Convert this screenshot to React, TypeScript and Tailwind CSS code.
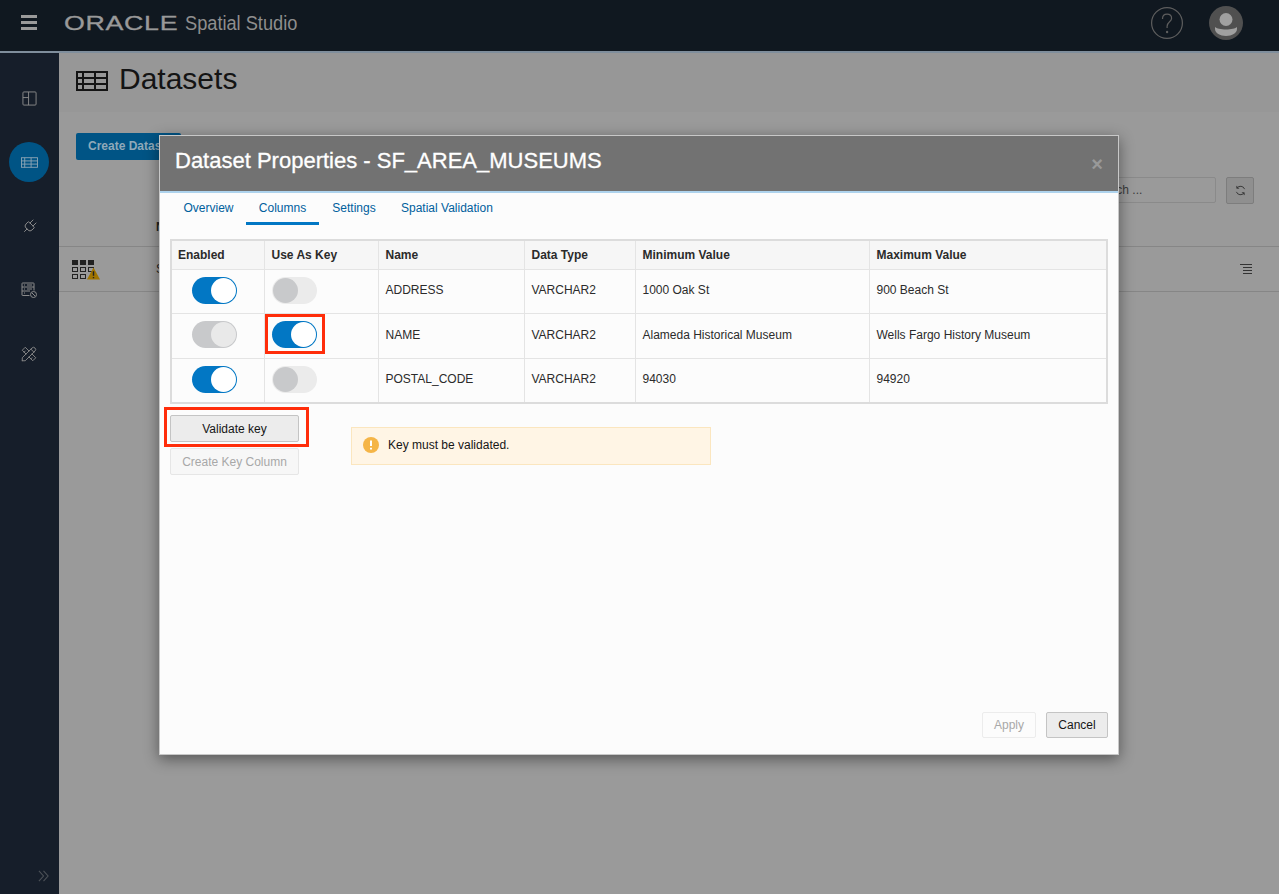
import { Plug } from 'lucide-react'
import { TbTools } from 'react-icons/tb'

const rows = [
    {enabled:'on',key:'off',name:'ADDRESS',type:'VARCHAR2',min:'1000 Oak St',max:'900 Beach St',height:'h-[44px]'},
    {enabled:'disabled',key:'on',name:'NAME',type:'VARCHAR2',min:'Alameda Historical Museum',max:'Wells Fargo History Museum',height:'h-[45px]'},
    {enabled:'on',key:'off',name:'POSTAL_CODE',type:'VARCHAR2',min:'94030',max:'94920',height:'h-[44px]'},
]

const headers = [
    {label:'Enabled',width:'w-[92px] px-[6px]'},
    {label:'Use As Key',width:'w-[114px] px-[7px]'},
    {label:'Name',width:'w-[146px] px-[7px]'},
    {label:'Data Type',width:'w-[111px] px-[7px]'},
    {label:'Minimum Value',width:'w-[234px] px-[7px]'},
    {label:'Maximum Value',width:'px-[7px]'},
]

const Toggle = ({state}:{state:string}) => {
    if(state==='on'){
        return (
            <div className="flex h-[27px] w-[45px] items-center justify-end rounded-full bg-[#0277c4] pr-px">
                <div className="h-[25px] w-[25px] rounded-full bg-white"></div>
            </div>
        )
    }
    if(state==='disabled'){
        return (
            <div className="flex h-[27px] w-[45px] items-center justify-end rounded-full bg-[#c8c9cb] pr-px">
                <div className="h-[25px] w-[25px] rounded-full bg-[#e9e9e9]"></div>
            </div>
        )
    }
    return (
        <div className="flex h-[27px] w-[45px] items-center justify-start rounded-full bg-[#ebebeb] pl-px">
            <div className="h-[25px] w-[25px] rounded-full bg-[#c8c9cb]"></div>
        </div>
    )
}

const TableIcon = ({className,stroke,weight}:{className:string,stroke:string,weight:number}) => (
    <svg viewBox="0 0 32 20" className={className} fill="none" stroke={stroke} strokeWidth={weight}>
        <rect x="1" y="1" width="30" height="18"/>
        <path d="M1 7h30M1 13h30M7 1v18M19 1v18"/>
    </svg>
)

const SideIcon = ({children,active}:{children:any,active?:boolean}) => (
    <div className="flex h-[64px] items-center justify-center pr-px">
        <div className={`flex h-10 w-10 items-center justify-center rounded-full ${active ? 'bg-[#005485]' : ''}`}>
            {children}
        </div>
    </div>
)

const App = () => {
    return (
        <div className="relative flex h-[894px] w-[1279px] flex-col overflow-hidden bg-[#9a9a9a] font-['Liberation_Sans',sans-serif]">
            <header className="flex h-[53px] shrink-0 items-center border-b-2 border-[#7f8e9c] bg-[#101820] pb-[6px] pl-[21px] pr-[36px]">
                <div className="flex w-[16px] flex-col gap-[3px]">
                    <div className="h-[3px] bg-[#9a9a9a]"></div>
                    <div className="h-[3px] bg-[#9a9a9a]"></div>
                    <div className="h-[3px] bg-[#9a9a9a]"></div>
                </div>
                <span className="ml-[27px] w-[93px] origin-left scale-x-[1.34] text-[20px] leading-none tracking-[0.5px] text-[#999999] [-webkit-text-stroke:0.3px_#999999]">ORACLE</span>
                <span className="ml-[28px] origin-left scale-x-[0.91] text-[20px] leading-none text-[#8e8e8e]">Spatial Studio</span>
                <svg viewBox="0 0 32 32" className="ml-auto h-8 w-8" fill="none" stroke="#5e5e5e" strokeWidth="1.2">
                    <circle cx="16" cy="16" r="15.4"/>
                    <path d="M11.5 12c0-3 2-4.8 4.6-4.8 2.7 0 4.5 1.8 4.5 4.1 0 3.4-4.5 3.7-4.5 8v1.6"/>
                    <circle cx="16.1" cy="25" r="0.6" fill="#5e5e5e"/>
                </svg>
                <svg viewBox="0 0 34 34" className="ml-[26px] h-[34px] w-[34px]">
                    <circle cx="17" cy="17" r="17" fill="#505050"/>
                    <circle cx="17" cy="13.500" r="6.500" fill="#a0a0a0"/>
                    <path d="M6 21c1.500 1.500 6 2.500 11 2.500s9.500-1 11-2.500v2c0 4-5 7-11 7S6 27 6 23z" fill="#a0a0a0"/>
                </svg>
            </header>

            <div className="flex flex-1">
                <nav className="relative flex w-[59px] shrink-0 flex-col bg-[#161e2a] pt-[13px]">
                    <SideIcon>
                        <svg viewBox="0 0 16 16" className="h-[15px] w-[15px]" fill="none" stroke="#8b8b8b" strokeWidth="1">
                            <rect x="1" y="1" width="14" height="14" rx="1"/>
                            <path d="M1 7h6M7 1v14"/>
                        </svg>
                    </SideIcon>
                    <SideIcon active>
                        <TableIcon className="h-[13px] w-[17px]" stroke="#8ea6b6" weight={1.7}/>
                    </SideIcon>
                    <SideIcon>
                        <Plug className="h-[17px] w-[17px] rotate-45 text-[#8b8b8b]" strokeWidth={1.3}/>
                    </SideIcon>
                    <SideIcon>
                        <svg viewBox="0 0 16 16" className="h-[16px] w-[16px]" fill="none" stroke="#8b8b8b" strokeWidth="1">
                            <path d="M8.500 13.500H1.500a.500.500 0 0 1-.500-.500V1.500a.500.500 0 0 1 .500-.500h11a.500.500 0 0 1 .500.500V8.500M1 5h12M1 9h8M3 3h1M3 7h1M3 11h1M6 3h5M6 7h5"/>
                            <circle cx="12.500" cy="12.500" r="3"/>
                            <path d="M11 11l3 3"/>
                        </svg>
                    </SideIcon>
                    <SideIcon>
                        <TbTools className="h-[18px] w-[18px] text-[#8b8b8b]" strokeWidth={1.2}/>
                    </SideIcon>
                    <svg viewBox="0 0 12 12" className="absolute bottom-[12px] left-[38px] h-[12px] w-[11px]" fill="none" stroke="#4c5157" strokeWidth="1.2">
                        <path d="M1 .5L6 6l-5 5.500M6 .5L11 6l-5 5.500"/>
                    </svg>
                </nav>

                <main className="flex-1">
                    <div className="flex h-[59px] items-start bg-[#979797] pl-[17px] pt-[8px]">
                        <TableIcon className="mt-[10px] h-[20px] w-[32px]" stroke="#141414" weight={2}/>
                        <h1 className="ml-[11px] text-[30px] leading-[36px] text-[#141414]">Datasets</h1>
                    </div>
                    <div className="relative flex h-[134px] items-start justify-between pl-[17px] pr-[25px] pt-[21px]">
                        <button className="h-[27px] w-[105px] rounded-[2px] bg-[#005485] pb-px pl-3 text-left text-[12px] font-bold text-[#8fa9b9]">Create Dataset</button>
                        <div className="mt-[44px] flex gap-[10px]">
                            <div className="flex h-[26px] w-[200px] items-center rounded-[2px] border border-[#8a8a8a] pl-[74px] text-[12px] text-[#3c3c3c]">Search ...</div>
                            <div className="flex h-[27px] w-[28px] items-center justify-center rounded-[2px] border border-[#7d7d7d] bg-[#8f8f8f]">
                                <svg viewBox="0 0 12 12" className="h-[11px] w-[11px]" fill="none" stroke="#333333" strokeWidth="1">
                                    <path d="M10.500 4.500A4.800 4.800 0 0 0 2 3.500M1.500 7.500A4.800 4.800 0 0 0 10 8.500M2 1v2.500h2.500M10 11V8.500H7.500"/>
                                </svg>
                            </div>
                        </div>
                        <span className="absolute bottom-[10px] left-[97px] text-[12px] font-bold text-[#222222]">Name</span>
                    </div>
                    <div className="flex h-[46px] items-center justify-between border-y border-[#868686] pl-[13px] pr-[27px]">
                        <div className="relative flex items-center">
                            <div className="grid w-[22px] grid-cols-3 gap-x-[2px] gap-y-[2px]">
                                <div className="h-[5px] bg-[#222222]"></div>
                                <div className="h-[5px] bg-[#222222]"></div>
                                <div className="h-[5px] bg-[#222222]"></div>
                                <div className="h-[5px] border border-[#222222]"></div>
                                <div className="h-[5px] border border-[#222222]"></div>
                                <div className="h-[5px] border border-[#222222]"></div>
                                <div className="h-[5px] border border-[#222222]"></div>
                                <div className="h-[5px] border border-[#222222]"></div>
                            </div>
                            <svg viewBox="0 0 12 12" className="absolute left-[15px] top-[7px] h-[13px] w-[13px]">
                                <path d="M6 .5L12 11.500H0z" fill="#a07400"/>
                                <path d="M6 4v4M6 9.200v1.200" stroke="#222222" strokeWidth="1.300"/>
                            </svg>
                            <span className="ml-[62px] text-[12px] text-[#222222]">SF_AREA_MUSEUMS</span>
                        </div>
                        <div className="flex w-[12px] flex-col items-end gap-[2px]">
                            <div className="h-px w-[12px] bg-[#333333]"></div>
                            <div className="h-px w-[9px] bg-[#333333]"></div>
                            <div className="h-px w-[9px] bg-[#333333]"></div>
                            <div className="h-px w-[9px] bg-[#333333]"></div>
                        </div>
                    </div>
                </main>
            </div>

            <div className="absolute left-[159px] top-[135px] flex h-[620px] w-[960px] flex-col border border-[#c8c8c8] bg-[#fcfcfc] shadow-[0_4px_14px_rgba(0,0,0,0.45)]">
                <div className="flex h-[55px] shrink-0 items-center justify-between bg-[#727272] pl-[15px] pr-[15px]">
                    <h2 className="mb-[6px] text-[22px] text-white [-webkit-text-stroke:0.3px_white]">Dataset Properties - SF_AREA_MUSEUMS</h2>
                    <span className="text-[20px] font-bold leading-none text-[#999999]">×</span>
                </div>
                <div className="h-[2px] shrink-0 bg-[#aed3ed]"></div>
                <div className="flex h-[32px] shrink-0 pl-[12px] text-[12px] text-[#00609c]">
                    <div className="flex w-[73px] items-start justify-center pt-[6px]">Overview</div>
                    <div className="ml-px flex w-[73px] items-start justify-center border-b-[3px] border-[#0277c4] pt-[6px]">Columns</div>
                    <div className="flex w-[70px] items-start justify-center pt-[6px]">Settings</div>
                    <div className="flex items-start pl-[12px] pt-[6px]">Spatial Validation</div>
                </div>

                <div className="mx-[10px] mt-[14px] border-[2px] border-[#dcdcdc]">
                    <table className="w-full table-fixed border-collapse text-[12px] text-[#2b2b2b]">
                        <thead>
                            <tr className="h-[28px] border-b border-[#e4e4e4] bg-[#f6f6f6] text-left font-bold">
                                {headers.map((header)=>(
                                    <th key={header.label} className={`${header.width} border-r border-[#e4e4e4] last:border-r-0`}>{header.label}</th>
                                ))}
                            </tr>
                        </thead>
                        <tbody>
                            {rows.map((row)=>(
                                <tr key={row.name} className={`${row.height} border-b border-[#e4e4e4] last:border-b-0`}>
                                    <td className="border-r border-[#e4e4e4] pb-[2px] pl-[20px]"><Toggle state={row.enabled}/></td>
                                    <td className="border-r border-[#e4e4e4] pb-[2px] pl-[7px]"><Toggle state={row.key}/></td>
                                    <td className="border-r border-[#e4e4e4] px-[7px] pb-[2px]">{row.name}</td>
                                    <td className="border-r border-[#e4e4e4] px-[7px] pb-[2px]">{row.type}</td>
                                    <td className="border-r border-[#e4e4e4] px-[7px] pb-[2px]">{row.min}</td>
                                    <td className="px-[7px] pb-[2px]">{row.max}</td>
                                </tr>
                            ))}
                        </tbody>
                    </table>
                </div>

                <div className="flex pl-[10px] pt-[11px]">
                    <div className="flex w-[129px] flex-col gap-[6px] text-[12px]">
                        <button className="h-[27px] rounded-[2px] border border-[#c4c4c4] bg-[#ececec] text-[#161616]">Validate key</button>
                        <button className="h-[27px] rounded-[2px] border border-[#e6e6e6] bg-[#f7f7f7] text-[#a8a8a8]">Create Key Column</button>
                    </div>
                    <div className="ml-[52px] mt-[12px] flex h-[38px] w-[360px] items-center border border-[#fbe6bf] bg-[#fff5e5] pb-[2px] pl-[11px] text-[12px] text-[#161616]">
                        <svg viewBox="0 0 16 16" className="h-4 w-4">
                            <circle cx="8" cy="8" r="8" fill="#f5b547"/>
                            <path d="M8 3.500v5.500M8 10.800v1.700" stroke="#ffffff" strokeWidth="2"/>
                        </svg>
                        <span className="ml-[9px]">Key must be validated.</span>
                    </div>
                </div>

                <div className="mt-auto flex justify-end gap-[10px] pb-[16px] pr-[10px] text-[12px]">
                    <button className="h-[26px] w-[54px] rounded-[2px] border border-[#ececec] bg-[#fcfcfc] text-[#a8a8a8]">Apply</button>
                    <button className="h-[26px] w-[62px] rounded-[2px] border border-[#c4c4c4] bg-[#ececec] text-[#161616]">Cancel</button>
                </div>

                <div className="absolute left-[105px] top-[178px] h-[40px] w-[60px] border-[3px] border-[#ff2d0a]"></div>
                <div className="absolute left-[4px] top-[271px] h-[40px] w-[145px] border-[3px] border-[#ff2d0a]"></div>
            </div>
        </div>
    )
}

export default App
